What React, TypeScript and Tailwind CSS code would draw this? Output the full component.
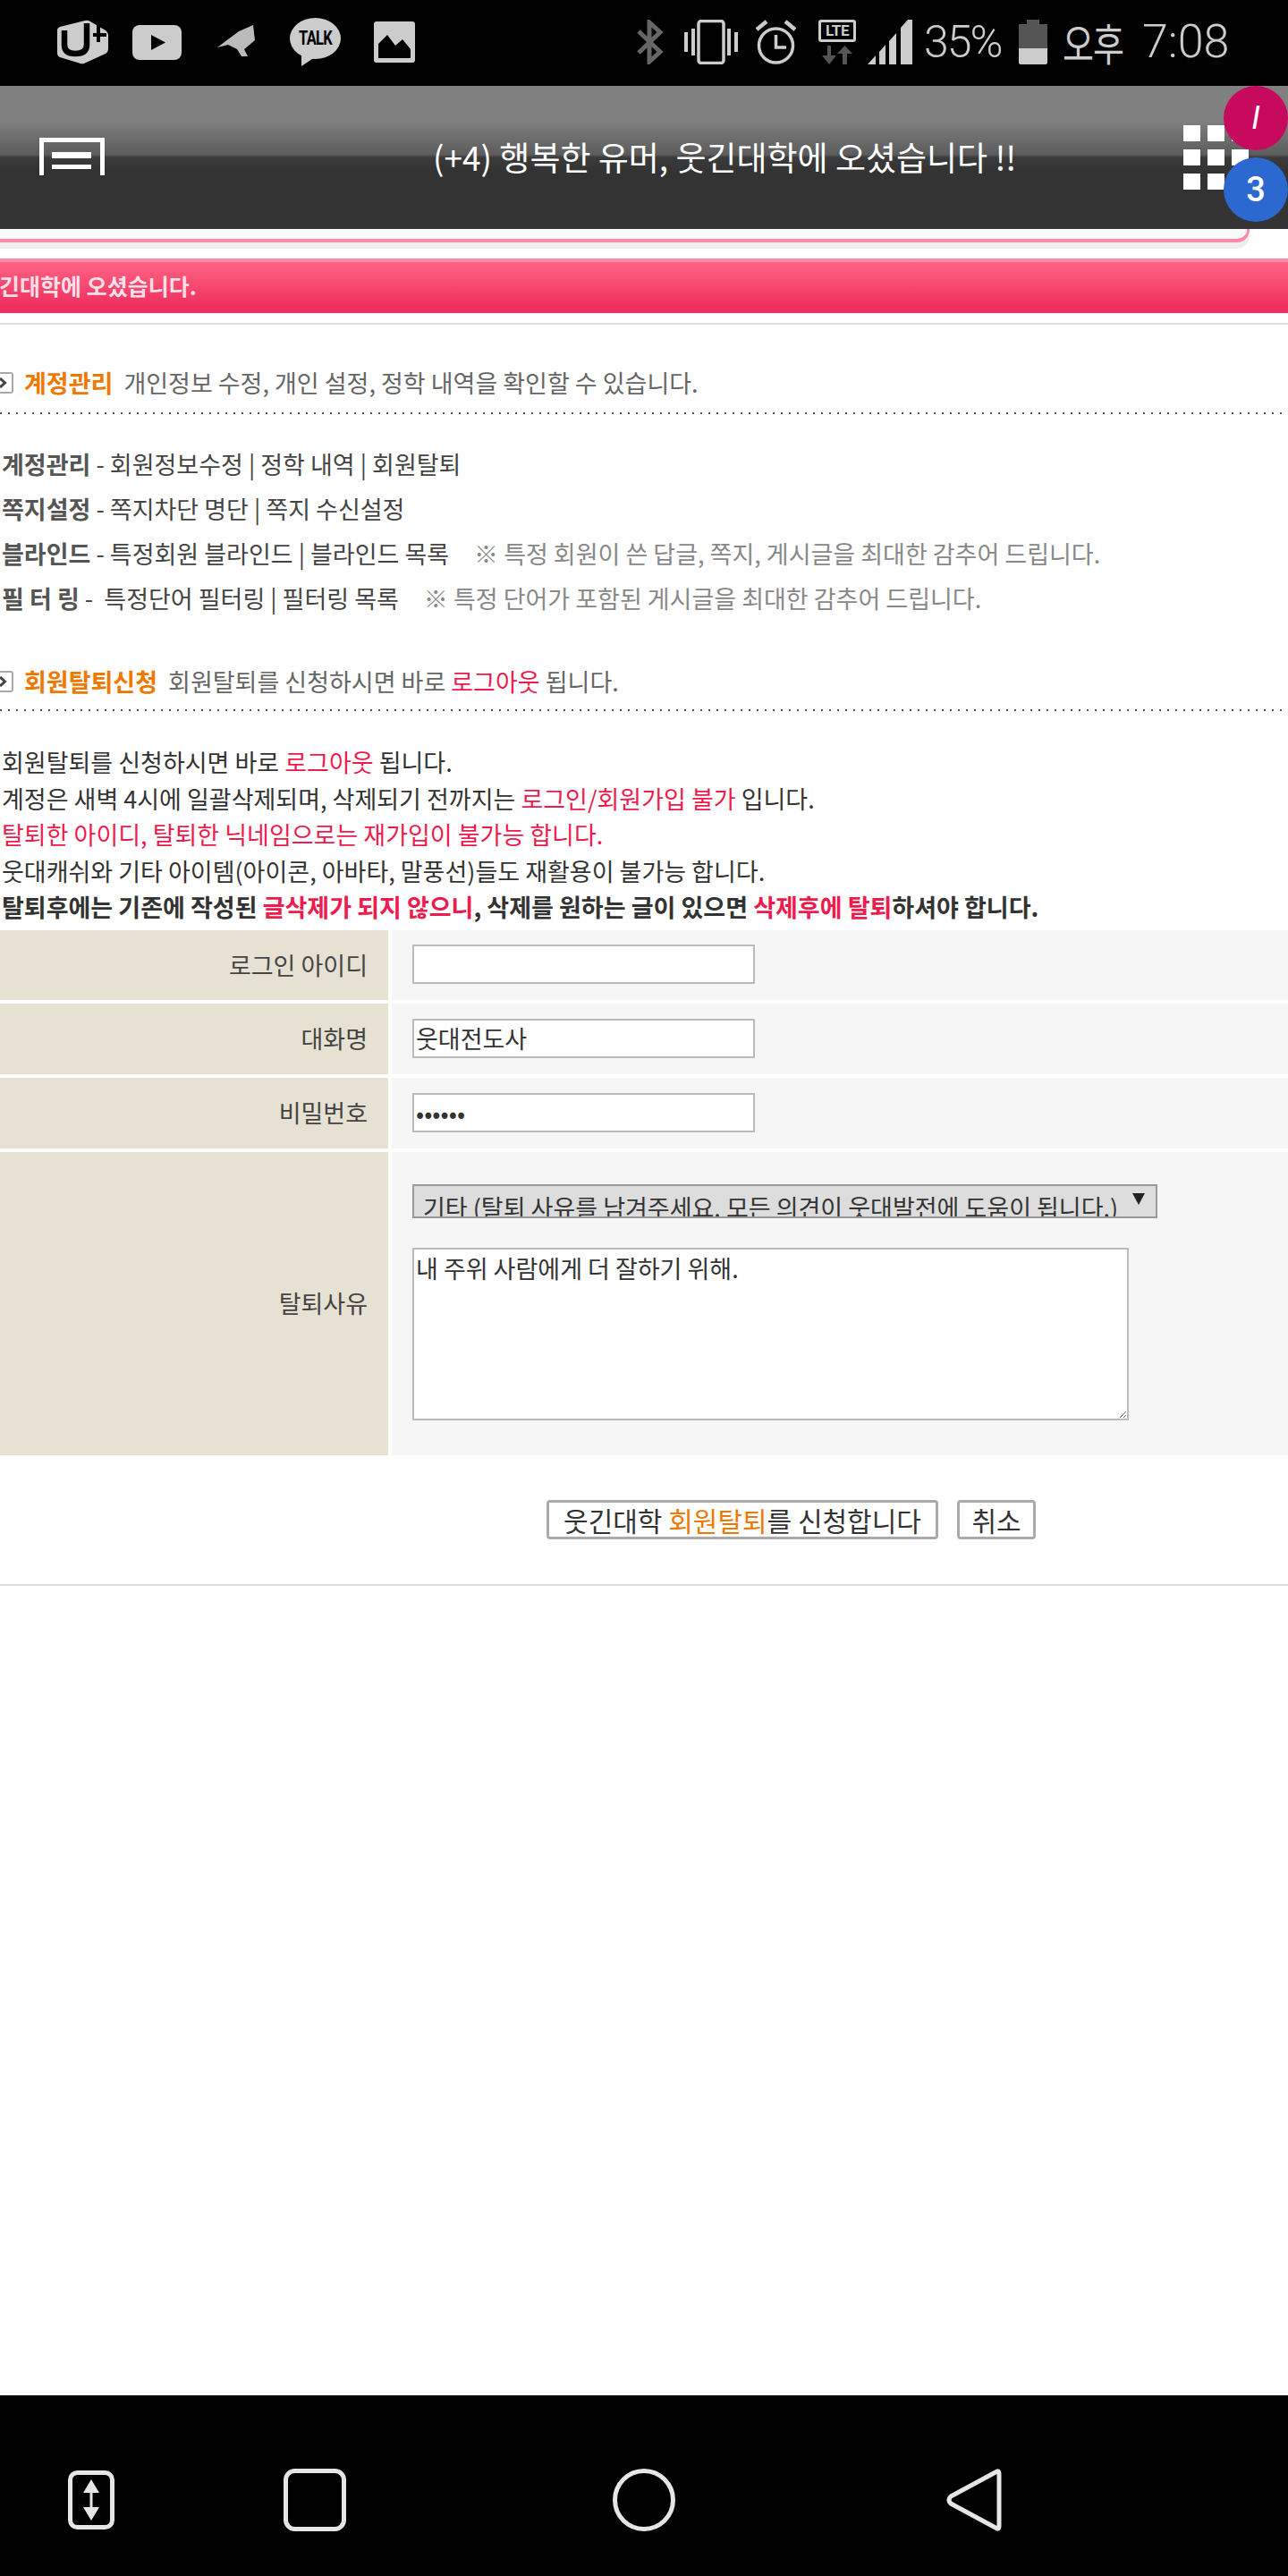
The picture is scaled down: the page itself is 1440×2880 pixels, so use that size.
import type { ReactNode } from 'react';

const FIELDS = [
  { label: '로그인 아이디', value: '', type: 'text', rowClass: 'h-[78px]' },
  { label: '대화명', value: '웃대전도사', type: 'text', rowClass: 'h-[79px]' },
  { label: '비밀번호', value: '••••••', type: 'text', rowClass: 'h-[79px]' },
];

function StatusIcons() {
  return (
    <>
      {/* U+ */}
      <svg className="ml-[63px] w-[59px] h-[50px] shrink-0" viewBox="0 0 59 50">
        <path d="M4 8 L32 1 Q35 0 38 2 L55 12 Q58 14 58 17 L58 33 Q58 36 55 38 L33 48 Q30 50 27 49 L4 42 Q1 41 1 37 L1 12 Q1 9 4 8Z" fill="#ccc" />
        <path d="M9 12 V28 Q9 38 21 38 Q34 38 34 28 V4" fill="none" stroke="#000" strokeWidth="6.5" />
        <path d="M47 5 V25 M41 17 H56" stroke="#000" strokeWidth="4" />
      </svg>
      {/* youtube */}
      <svg className="ml-[26px] w-[55px] h-[39px] shrink-0" viewBox="0 0 55 39">
        <rect width="55" height="39" rx="8" fill="#ccc" />
        <path d="M21 11 L37 19.5 L21 28Z" fill="#000" />
      </svg>
      {/* cap */}
      <svg className="ml-[39px] w-[46px] h-[38px] shrink-0" viewBox="0 0 46 38">
        <path d="M1 25 L25 7 L41 0 L43 17 L31 27 L35 35 L28 35 L23 27 L13 22Z" fill="#bbb" />
      </svg>
      {/* talk */}
      <div className="ml-[36px] relative w-[57px] h-[54px] shrink-0">
        <svg className="absolute inset-0 w-full h-full" viewBox="0 0 57 54">
          <ellipse cx="28.5" cy="23" rx="28.5" ry="23" fill="#ccc" />
          <path d="M13 38 L13 54 L28 44Z" fill="#ccc" />
        </svg>
        <span className="absolute left-0 right-0 top-[11px] text-center text-[22px] leading-[24px] font-bold text-black tracking-[-1px] font-['Roboto',sans-serif] scale-x-75">TALK</span>
      </div>
      {/* image */}
      <svg className="ml-[37px] w-[46px] h-[46px] shrink-0" viewBox="0 0 46 46">
        <rect width="46" height="46" rx="3" fill="#ccc" />
        <path d="M5 41 V25 L15 15 L24 27 L32 20 L41 31 V41Z" fill="#000" />
      </svg>
      {/* bluetooth */}
      <svg className="ml-[248px] w-[30px] h-[50px] shrink-0" viewBox="0 0 30 50" fill="none" stroke="#666" strokeWidth="5">
        <path d="M2 13 L26 36 L14 47 V3 L26 14 L2 37" />
      </svg>
      {/* vibrate */}
      <svg className="ml-[23px] w-[60px] h-[50px] shrink-0" viewBox="0 0 60 50" fill="#ccc">
        <rect x="0" y="14" width="4" height="22" />
        <rect x="8" y="10" width="4" height="30" />
        <rect x="48" y="10" width="4" height="30" />
        <rect x="56" y="14" width="4" height="22" />
        <rect x="16" y="1.5" width="28" height="47" rx="3" fill="none" stroke="#ccc" strokeWidth="3.5" />
      </svg>
      {/* alarm */}
      <svg className="ml-[20px] w-[45px] h-[50px] shrink-0" viewBox="0 0 45 50" fill="none" stroke="#ccc">
        <circle cx="22.5" cy="29" r="19" strokeWidth="3.5" />
        <path d="M22.5 17 V31 H34" strokeWidth="3.5" />
        <path d="M1 11 L12 2 M44 11 L33 2" strokeWidth="4.5" />
      </svg>
      {/* lte */}
      <div className="ml-[25px] w-[42px] h-[50px] shrink-0 flex flex-col items-center">
        <div className="w-[42px] h-[25px] border-[3px] border-[#ccc] rounded-[3px] text-[#ccc] text-[17px] leading-[19px] font-bold text-center font-['Roboto',sans-serif] tracking-[-0.5px]">LTE</div>
        <svg className="mt-[4px] w-[34px] h-[21px]" viewBox="0 0 34 21" fill="#555">
          <path d="M6 0 H10 V11 H16 L8 21 L0 11 H6Z" />
          <path d="M23 21 H28 V9 H34 L25.5 0 L17 9 H23Z" />
        </svg>
      </div>
      {/* signal */}
      <svg className="ml-[13px] w-[50px] h-[50px] shrink-0" viewBox="0 0 50 50" fill="#ccc">
        <path d="M0 50 L9 40 V50Z" />
        <path d="M13 36 L20 28 V50 H13Z" />
        <path d="M24 24 L32 15 V50 H24Z" />
        <path d="M37 9 L45 0 H50 V50 H37Z" />
      </svg>
      <span className="ml-[13px] w-[92px] shrink-0 text-[50px] leading-[50px] font-light text-[#ccc] font-['Roboto',sans-serif] tracking-[-2px]">35%</span>
      {/* battery */}
      <div className="ml-[14px] w-[32px] h-[50px] shrink-0 flex flex-col items-center">
        <div className="w-[14px] h-[5px] bg-[#555]" />
        <div className="w-[32px] h-[27px] bg-[#555]" />
        <div className="w-[32px] h-[18px] bg-[#ccc] rounded-b-[2px]" />
      </div>
      <span className="ml-[17px] w-[73px] shrink-0 text-[38px] leading-[50px] text-[#ccc] tracking-[-1px] scale-y-[1.3]">오후</span>
      <span className="ml-[16px] shrink-0 text-[52px] leading-[50px] font-light text-[#ccc] font-['Roboto',sans-serif]">7:08</span>
    </>
  );
}

function GridIcon() {
  return (
    <div className="grid grid-cols-3 gap-x-2 gap-y-[9px] w-[73px] shrink-0">
      {Array.from({ length: 9 }).map((_, i) => (
        <div key={i} className="w-[19px] h-[18px] bg-white" />
      ))}
    </div>
  );
}

function Arrow() {
  return (
    <div className="-ml-[9px] mr-[12px] w-[24px] h-[24px] shrink-0 border-2 border-[#aaa] rounded-[3px] flex items-center justify-center bg-white">
      <svg className="w-[10px] h-[12px]" viewBox="0 0 10 12" fill="none" stroke="#444" strokeWidth="3">
        <path d="M2 1 L7.5 6 L2 11" />
      </svg>
    </div>
  );
}

function Dots() {
  return <div className="h-[2px] shrink-0 bg-[repeating-linear-gradient(90deg,#555555_0,#555555_2px,transparent_2px,transparent_9px)]" />;
}

function Red({ children }: { children: ReactNode }) {
  return <span className="text-[#ee1c4e]">{children}</span>;
}

function MenuRow({ label, links, note }: { label: string; links: string; note?: string }) {
  return (
    <div className="h-[50px] flex items-center whitespace-pre text-[#444] pl-[2px]">
      <span className="font-bold text-[#555]">{label}</span>
      <span> - {links}</span>
      {note && <span className="text-[#888] ml-[28px]">{note}</span>}
    </div>
  );
}

export default function App() {
  return (
    <div className="w-[1440px] h-[2880px] flex flex-col bg-white overflow-hidden text-[27px] font-['Noto_Sans_CJK_KR','Noto_Sans',sans-serif]">
      <div className="h-[96px] bg-black flex items-center shrink-0 pb-[2px]">
        <StatusIcons />
      </div>

      <header className="relative h-[160px] shrink-0 flex items-center pl-[44px] pb-[2px] bg-[linear-gradient(#808080_0%,#808080_24%,#5c5c5c_48%,#3b3b3b_50%,#333333_60%,#333333_100%)]">
        <svg className="w-[73px] h-[42px] shrink-0" viewBox="0 0 73 42" fill="#fff">
          <path d="M0 0 H73 V42 H68 V5 H5 V42 H0Z" />
          <rect x="14" y="16" width="44" height="7" />
          <rect x="14" y="30" width="44" height="5" />
        </svg>
        <div className="ml-[367px] w-[660px] shrink-0 text-white text-[37px] leading-[44px] whitespace-nowrap">(+4) 행복한 유머, 웃긴대학에 오셨습니다 !!</div>
        <div className="ml-[179px] mt-[2px]">
          <GridIcon />
        </div>
        <div className="absolute right-0 top-0 w-[72px] h-[72px] rounded-full bg-[#c80a5e] text-white text-[36px] italic flex items-center justify-center font-['Roboto',sans-serif]">I</div>
        <div className="absolute right-0 top-[80px] w-[72px] h-[72px] rounded-full bg-[#2b68cf] text-white text-[38px] font-medium flex items-center justify-center font-['Roboto',sans-serif]">3</div>
      </header>

      <div className="h-[15px] w-[1397px] shrink-0 bg-[#fafafa] border-b-4 border-r-[3px] border-[#ff8aa5] rounded-br-[14px] shadow-[0_7px_0_#eeeeee]" />
      <div className="mt-[18px] h-[61px] shrink-0 border-t-4 border-[#ff8aa5] bg-[linear-gradient(#ff6485_0%,#ee2e5c_90%)] overflow-hidden flex items-center pb-[4px]">
        <span className="-ml-[24px] text-[25px] font-bold text-[#ffdfe7] whitespace-nowrap">웃긴대학에 오셨습니다.</span>
      </div>
      <div className="mt-[11px] h-[2px] shrink-0 bg-[#dddddd]" />

      <section className="h-[98px] shrink-0 pt-[50px] flex items-start">
        <div className="h-[30px] flex items-center whitespace-nowrap">
          <Arrow />
          <span className="font-bold text-[#ef7900]">계정관리</span>
          <span className="ml-[12px] text-[#666]">개인정보 수정, 개인 설정, 정학 내역을 확인할 수 있습니다.</span>
        </div>
      </section>
      <Dots />

      <div className="mt-[31px] shrink-0">
        <MenuRow label="계정관리" links="회원정보수정 | 정학 내역 | 회원탈퇴" />
        <MenuRow label="쪽지설정" links="쪽지차단 명단 | 쪽지 수신설정" />
        <MenuRow label="블라인드" links="특정회원 블라인드 | 블라인드 목록" note="※ 특정 회원이 쓴 답글, 쪽지, 게시글을 최대한 감추어 드립니다." />
        <MenuRow label="필 터 링" links=" 특정단어 필터링 | 필터링 목록" note="※ 특정 단어가 포함된 게시글을 최대한 감추어 드립니다." />
      </div>

      <section className="h-[99px] shrink-0 pt-[53px] flex items-start">
        <div className="h-[30px] flex items-center whitespace-nowrap">
          <Arrow />
          <span className="font-bold text-[#ef7900]">회원탈퇴신청</span>
          <span className="ml-[12px] text-[#666]">회원탈퇴를 신청하시면 바로 <Red>로그아웃</Red> 됩니다.</span>
        </div>
      </section>
      <Dots />

      <div className="mt-[37px] h-[208px] shrink-0 pl-[2px] text-[#333] leading-[40.5px] whitespace-nowrap">
        <p>회원탈퇴를 신청하시면 바로 <Red>로그아웃</Red> 됩니다.</p>
        <p>계정은 새벽 4시에 일괄삭제되며, 삭제되기 전까지는 <Red>로그인/회원가입 불가</Red> 입니다.</p>
        <p><Red>탈퇴한 아이디, 탈퇴한 닉네임으로는 재가입이 불가능 합니다.</Red></p>
        <p>웃대캐쉬와 기타 아이템(아이콘, 아바타, 말풍선)들도 재활용이 불가능 합니다.</p>
        <p className="font-bold">탈퇴후에는 기존에 작성된 <Red>글삭제가 되지 않으니</Red>, 삭제를 원하는 글이 있으면 <Red>삭제후에 탈퇴</Red>하셔야 합니다.</p>
      </div>

      <div className="shrink-0 flex flex-col gap-[4px] text-[#444]">
        {FIELDS.map((f) => (
          <div key={f.label} className={`flex gap-[4px] ${f.rowClass}`}>
            <div className="w-[434px] shrink-0 bg-[#e7e1d3] flex items-center justify-end pr-[23px]">{f.label}</div>
            <div className="flex-1 bg-[#f6f6f6] flex items-center pl-[23px] pb-[2px]">
              <input
                readOnly
                type={f.type}
                defaultValue={f.value}
                className="w-[383px] h-[44px] bg-white border-2 border-[#bbbbbb] px-[2px] text-[#333] outline-none"
              />
            </div>
          </div>
        ))}
        <div className="flex gap-[4px] h-[339px]">
          <div className="w-[434px] shrink-0 bg-[#e7e1d3] flex items-center justify-end pr-[23px]">탈퇴사유</div>
          <div className="flex-1 bg-[#f6f6f6] flex flex-col items-start pl-[23px] pt-[36px]">
            <div className="relative w-[833px] h-[38px] bg-[#dddddd] border-2 border-[#999999] overflow-hidden pl-[10px] pt-[5px] text-[#333] leading-[38px] whitespace-nowrap">
              기타 (탈퇴 사유를 남겨주세요. 모든 의견이 웃대발전에 도움이 됩니다.)
              <svg className="absolute right-[12px] top-[8px] w-[14px] h-[13px]" viewBox="0 0 14 13" fill="#222">
                <path d="M0 0 H14 L7 13Z" />
              </svg>
            </div>
            <textarea
              readOnly
              defaultValue="내 주위 사람에게 더 잘하기 위해."
              className="mt-[33px] w-[801px] h-[193px] bg-white border-2 border-[#bbbbbb] px-[2px] py-[1px] text-[#333] outline-none"
            />
          </div>
        </div>
      </div>

      <div className="mt-[50px] shrink-0 flex pl-[611px] gap-[21px] text-[#333] text-[30px]">
        <button className="w-[438px] h-[44px] bg-white border-[3px] border-[#aaaaaa] rounded-[4px] whitespace-nowrap leading-none">
          웃긴대학 <span className="text-[#ef7900]">회원탈퇴</span>를 신청합니다
        </button>
        <button className="w-[88px] h-[44px] bg-white border-[3px] border-[#aaaaaa] rounded-[4px] leading-none">취소</button>
      </div>
      <div className="mt-[50px] h-[2px] shrink-0 bg-[#dddddd]" />

      <div className="flex-1" />

      <nav className="h-[202px] shrink-0 bg-black flex items-center pl-[76px] pt-[32px]">
        <svg className="w-[52px] h-[66px] shrink-0" viewBox="0 0 52 66" fill="none" stroke="#e6e6e6">
          <rect x="2.5" y="2.5" width="47" height="61" rx="8" strokeWidth="5" />
          <path d="M26 15 V51" strokeWidth="3" />
          <path d="M26 10 L35 25 H17Z M26 56 L35 41 H17Z" fill="#e6e6e6" stroke="none" />
        </svg>
        <svg className="ml-[189px] w-[70px] h-[70px] shrink-0" viewBox="0 0 70 70" fill="none" stroke="#e6e6e6" strokeWidth="5">
          <rect x="2.5" y="2.5" width="65" height="65" rx="10" />
        </svg>
        <svg className="ml-[298px] w-[70px] h-[70px] shrink-0" viewBox="0 0 70 70" fill="none" stroke="#e6e6e6" strokeWidth="5">
          <circle cx="35" cy="35" r="32.5" />
        </svg>
        <svg className="ml-[303px] w-[62px] h-[70px] shrink-0" viewBox="0 0 62 70" fill="none" stroke="#e6e6e6" strokeWidth="5" strokeLinejoin="round">
          <path d="M59 6 Q59 1 55 4 L5 31 Q1 35 5 39 L55 66 Q59 69 59 64Z" />
        </svg>
      </nav>
    </div>
  );
}
